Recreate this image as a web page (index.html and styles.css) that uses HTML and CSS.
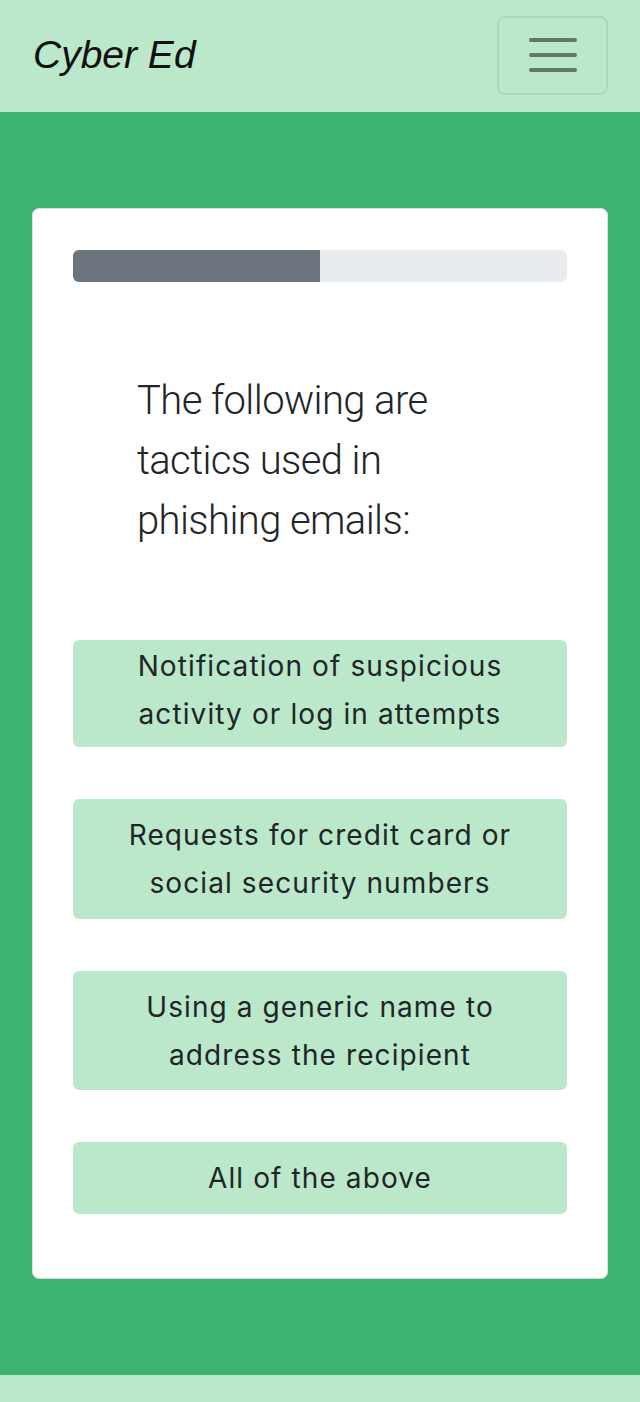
FILE: index.html
```html
<!DOCTYPE html>
<html lang="en">
<head>
<meta charset="utf-8">
<title>Cyber Ed</title>
<link rel="stylesheet" href="styles.css">
</head>
<body>
<nav class="navbar">
  <a class="brand" href="#">Cyber Ed</a>
  <button class="toggler" type="button" aria-label="Toggle navigation">
    <svg width="48" height="34" viewBox="0 0 48 34" aria-hidden="true">
      <path d="M2 2h44M2 17h44M2 32h44" stroke="#5f7a68" stroke-width="4" stroke-linecap="round"/>
    </svg>
  </button>
</nav>
<main class="main">
  <section class="card">
    <div class="progress"><div class="progress-bar" style="width:50%"></div></div>
    <h2 class="question">The following are tactics used in phishing emails:</h2>
    <div class="options">
      <button class="option option-first" type="button">Notification of suspicious activity or log in attempts</button>
      <button class="option" type="button">Requests for credit card or social security numbers</button>
      <button class="option" type="button">Using a generic name to address the recipient</button>
      <button class="option" type="button">All of the above</button>
    </div>
  </section>
</main>
<footer class="footer"></footer>
</body>
</html>
```
FILE: styles.css
```css
* { box-sizing: border-box; }
html, body { margin: 0; padding: 0; }
body {
  font-family: Inter, "Noto Sans", sans-serif;
  color: #212529;
  background: #bbe8ca;
}
.navbar {
  height: 112px;
  background: #bbe8ca;
  display: flex;
  align-items: center;
  justify-content: space-between;
  padding: 0 32px 0 33px;
}
.brand {
  font-family: "Liberation Sans", Arial, sans-serif;
  font-style: italic;
  font-size: 39px;
  color: #111;
  text-decoration: none;
  margin-top: -2px;
}
.toggler {
  width: 111px;
  height: 79px;
  border: 2px solid #a9d9b9;
  border-radius: 8px;
  background: transparent;
  display: flex;
  align-items: center;
  justify-content: center;
  padding: 0;
  margin-top: -2px;
}
.toggler svg { display: block; }
.main {
  background: #3cb371;
  padding: 96px 32px;
}
.card {
  background: #fff;
  border: 1px solid #dcdcdc;
  border-radius: 7px;
  padding: 41px 40px 64px;
}
.progress {
  height: 32px;
  background: #e9ecef;
  border-radius: 6px;
  overflow: hidden;
  display: flex;
}
.progress-bar {
  background: #6c757d;
  height: 100%;
}
.question {
  margin: 89px 0 0;
  padding: 0 64px;
  font-family: Roboto, Inter, sans-serif;
  font-size: 40px;
  font-weight: 300;
  line-height: 60px;
  letter-spacing: -0.6px;
}
.options {
  margin-top: 89px;
  display: flex;
  flex-direction: column;
  gap: 52px;
}
.option {
  font-family: Inter, "Noto Sans", sans-serif;
  font-size: 28px;
  line-height: 48px;
  color: #212529;
  background: #bbe8ca;
  border: 0;
  border-radius: 6px;
  padding: 12px 30px 11.5px;
  text-align: center;
  width: 100%;
  letter-spacing: 1.1px;
}
.option-first {
  padding: 2px 30px 9px;
}
.footer {
  height: 27px;
  background: #bbe8ca;
}
```
